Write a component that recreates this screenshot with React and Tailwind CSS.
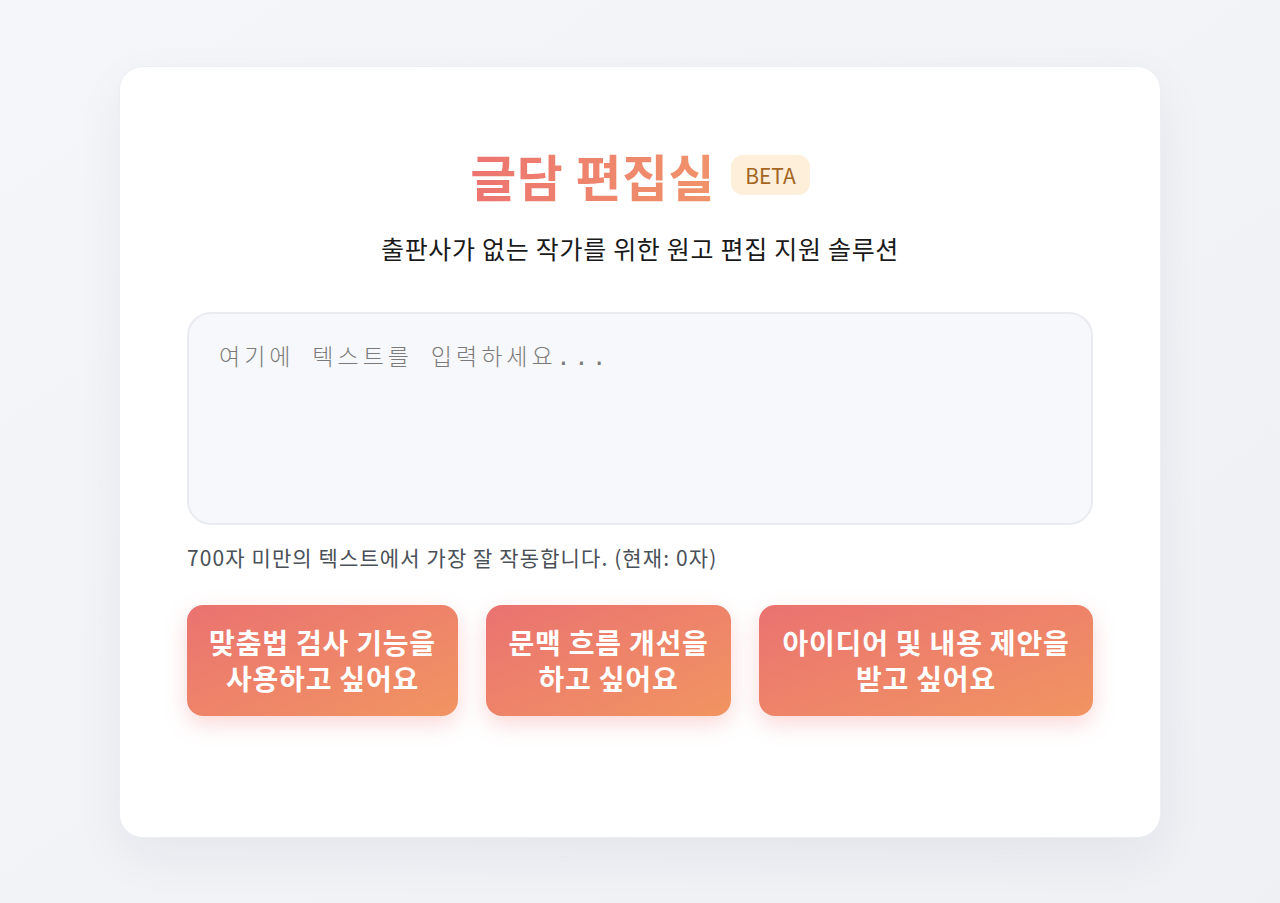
import React, { useState } from 'react';

const KR = { fontFamily: '"Noto Sans CJK KR", "Noto Sans", sans-serif' };

function ActionButton({ width, first, second }) {
  return (
    <button
      className="flex h-[111px] items-center justify-center rounded-[16px] bg-gradient-to-br from-[#ea7270] to-[#f19461] text-center text-[28px] font-bold leading-[36px] tracking-[0.8px] text-white shadow-[0_8px_22px_rgba(236,116,112,0.28)]"
      style={{ width }}
    >
      <span>
        {first}
        <br />
        {second}
      </span>
    </button>
  );
}

export default function App() {
  const [text, setText] = useState('');

  return (
    <div
      className="flex min-h-screen items-center justify-center bg-gradient-to-br from-[#f5f6f9] to-[#eef0f4]"
      style={KR}
    >
      <div className="w-[1042px] rounded-[24px] border border-[#eceef3] bg-white px-[67px] pb-[121px] pt-[79px] shadow-[0_18px_50px_rgba(30,40,80,0.06)]">
        <div className="flex items-center justify-center gap-[16px]">
          <h1 className="bg-gradient-to-r from-[#ec7470] to-[#f0936a] bg-clip-text text-[50px] font-bold leading-[58px] tracking-[0.6px] text-transparent">
            글담 편집실
          </h1>
          <span className="rounded-[12px] bg-[#fdefd9] px-[14px] py-[6px] text-[21px] leading-[28px] text-[#a3651f]">
            BETA
          </span>
        </div>

        <p className="mt-[28px] text-center text-[25px] leading-[32px] tracking-[0.7px] text-[#1a1a1a]">
          출판사가 없는 작가를 위한 원고 편집 지원 솔루션
        </p>

        <textarea
          value={text}
          onChange={(e) => setText(e.target.value)}
          placeholder="여기에 텍스트를 입력하세요..."
          className="mt-[48px] block h-[213px] w-full resize-none rounded-[24px] border-2 border-[#e9ebf1] bg-[#f7f8fb] px-[30px] py-[27px] text-[23px] leading-[32px] tracking-[4px] text-[#333] outline-none placeholder:text-[#7a7a7a]"
          style={{ fontFamily: '"DejaVu Sans Mono", "Noto Sans CJK KR", monospace', fontWeight: 300 }}
        />

        <p className="mt-[17px] text-[21px] leading-[30px] tracking-[1.1px] text-[#4a5058]">
          700자 미만의 텍스트에서 가장 잘 작동합니다. (현재: {text.length}자)
        </p>

        <div className="mt-[33px] flex justify-between">
          <ActionButton width={271} first="맞춤법 검사 기능을" second="사용하고 싶어요" />
          <ActionButton width={245} first="문맥 흐름 개선을" second="하고 싶어요" />
          <ActionButton width={334} first="아이디어 및 내용 제안을" second="받고 싶어요" />
        </div>
      </div>
    </div>
  );
}
